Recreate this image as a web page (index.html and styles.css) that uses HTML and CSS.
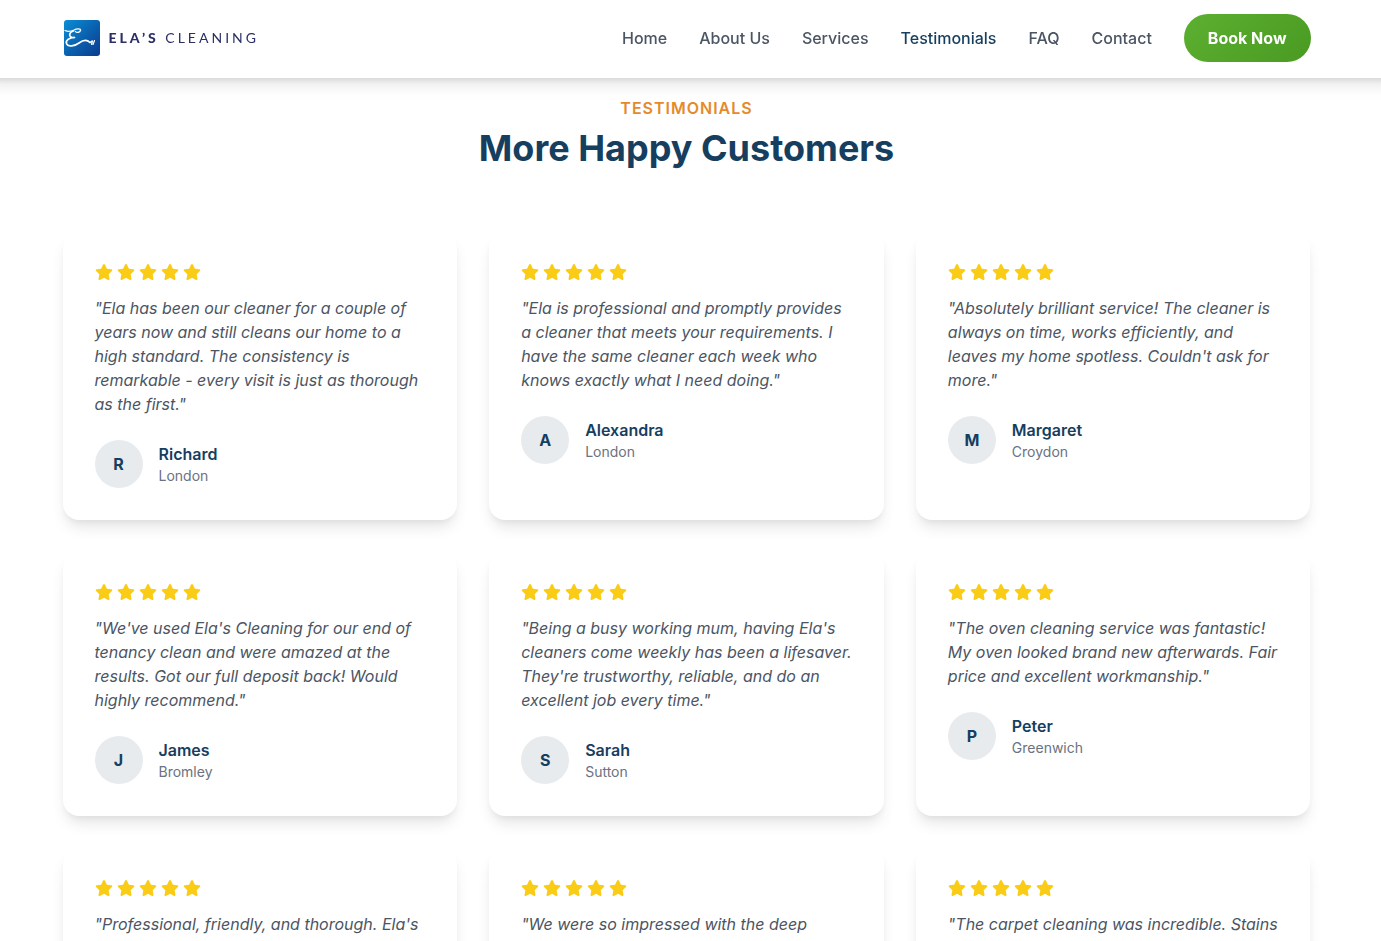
FILE: index.html
```html
<!DOCTYPE html>
<html lang="en">
<head>
    <meta charset="UTF-8">
    <meta name="viewport" content="width=device-width, initial-scale=1.0">
    <title>Testimonials - Ela's Cleaning</title>
    <link rel="stylesheet" href="styles.css">
</head>
<body>
    <!-- Shared icons -->
    <svg class="sprite" aria-hidden="true">
        <symbol id="star" viewBox="0 0 576 512">
            <path d="M316.9 18C311.6 7 300.4 0 288.1 0s-23.4 7-28.8 18L195 150.3 51.4 171.5c-12 1.8-22 10.2-25.7 21.7s-.7 24.2 7.9 32.7L137.8 329 113.2 474.7c-2 12 3 24.2 12.9 31.3s23 8 33.8 2.3l128.3-68.5 128.3 68.5c10.8 5.7 23.9 4.9 33.8-2.3s14.9-19.3 12.9-31.3L438.5 329 542.7 225.9c8.6-8.5 11.7-21.2 7.9-32.7s-13.7-19.9-25.7-21.7L381.2 150.3 316.9 18z"/>
        </symbol>
        <symbol id="stars" viewBox="0 0 106 16">
            <use href="#star" x="0" width="18" height="16"/>
            <use href="#star" x="22" width="18" height="16"/>
            <use href="#star" x="44" width="18" height="16"/>
            <use href="#star" x="66" width="18" height="16"/>
            <use href="#star" x="88" width="18" height="16"/>
        </symbol>
    </svg>

    <header class="header">
        <div class="container header-inner">
            <a href="#" class="logo">
                <svg class="logo-mark" viewBox="0 0 36 36" aria-hidden="true">
                    <defs>
                        <linearGradient id="logoBlue" x1="0" y1="0" x2="1" y2="1">
                            <stop offset="0" stop-color="#0a8fd6"/>
                            <stop offset="0.5" stop-color="#0a62b0"/>
                            <stop offset="1" stop-color="#0a3c8c"/>
                        </linearGradient>
                    </defs>
                    <rect width="36" height="36" rx="3" fill="url(#logoBlue)"/>
                    <g fill="none" stroke="#fff" stroke-linecap="round" stroke-linejoin="round">
                        <path stroke-width="1.3" d="M1 10.500C4 12 7 11.500 10 10C13 8.300 17 8.500 16.500 10.500C16 12.500 12.500 13 11.500 11.500"/>
                        <path stroke-width="1.7" d="M9.500 11C4.500 12.500 4 18 10.500 17.500C5 17.500 1.500 20.500 2.500 23.500C4 27.500 11 26 15 23C19 20 23 19.500 26 22.500"/>
                        <path stroke-width="1.2" d="M26 22.500L28 21M27.500 24.500L28.500 21M29 24.500L30.500 20.500"/>
                    </g>
                </svg>
                <span class="logo-text"><strong>ELA’S</strong> CLEANING</span>
            </a>
            <nav class="nav">
                <a href="#">Home</a>
                <a href="#">About Us</a>
                <a href="#">Services</a>
                <a href="#" class="active">Testimonials</a>
                <a href="#">FAQ</a>
                <a href="#">Contact</a>
                <a href="#" class="btn">Book Now</a>
            </nav>
        </div>
    </header>

    <main class="testimonials">
        <div class="container">
            <div class="section-title">
                <p class="eyebrow">TESTIMONIALS</p>
                <h2>More Happy Customers</h2>
            </div>

            <div class="grid">
                <article class="card">
                    <svg class="stars" role="img" aria-label="5 stars"><use href="#stars"/></svg>
                    <p class="quote">"Ela has been our cleaner for a couple of years now and still cleans our home to a high standard. The consistency is remarkable - every visit is just as thorough as the first."</p>
                    <div class="author">
                        <div class="avatar">R</div>
                        <div>
                            <h4>Richard</h4>
                            <p>London</p>
                        </div>
                    </div>
                </article>

                <article class="card">
                    <svg class="stars" role="img" aria-label="5 stars"><use href="#stars"/></svg>
                    <p class="quote">"Ela is professional and promptly provides a cleaner that meets your requirements. I have the same cleaner each week who knows exactly what I need doing."</p>
                    <div class="author">
                        <div class="avatar">A</div>
                        <div>
                            <h4>Alexandra</h4>
                            <p>London</p>
                        </div>
                    </div>
                </article>

                <article class="card">
                    <svg class="stars" role="img" aria-label="5 stars"><use href="#stars"/></svg>
                    <p class="quote">"Absolutely brilliant service! The cleaner is always on time, works efficiently, and leaves my home spotless. Couldn't ask for more."</p>
                    <div class="author">
                        <div class="avatar">M</div>
                        <div>
                            <h4>Margaret</h4>
                            <p>Croydon</p>
                        </div>
                    </div>
                </article>

                <article class="card">
                    <svg class="stars" role="img" aria-label="5 stars"><use href="#stars"/></svg>
                    <p class="quote">"We've used Ela's Cleaning for our end of tenancy clean and were amazed at the results. Got our full deposit back! Would highly recommend."</p>
                    <div class="author">
                        <div class="avatar">J</div>
                        <div>
                            <h4>James</h4>
                            <p>Bromley</p>
                        </div>
                    </div>
                </article>

                <article class="card">
                    <svg class="stars" role="img" aria-label="5 stars"><use href="#stars"/></svg>
                    <p class="quote">"Being a busy working mum, having Ela's cleaners come weekly has been a lifesaver. They're trustworthy, reliable, and do an excellent job every time."</p>
                    <div class="author">
                        <div class="avatar">S</div>
                        <div>
                            <h4>Sarah</h4>
                            <p>Sutton</p>
                        </div>
                    </div>
                </article>

                <article class="card">
                    <svg class="stars" role="img" aria-label="5 stars"><use href="#stars"/></svg>
                    <p class="quote">"The oven cleaning service was fantastic! My oven looked brand new afterwards. Fair price and excellent workmanship."</p>
                    <div class="author">
                        <div class="avatar">P</div>
                        <div>
                            <h4>Peter</h4>
                            <p>Greenwich</p>
                        </div>
                    </div>
                </article>

                <article class="card">
                    <svg class="stars" role="img" aria-label="5 stars"><use href="#stars"/></svg>
                    <p class="quote">"Professional, friendly, and thorough. Ela's</p>
                </article>

                <article class="card">
                    <svg class="stars" role="img" aria-label="5 stars"><use href="#stars"/></svg>
                    <p class="quote">"We were so impressed with the deep</p>
                </article>

                <article class="card">
                    <svg class="stars" role="img" aria-label="5 stars"><use href="#stars"/></svg>
                    <p class="quote">"The carpet cleaning was incredible. Stains</p>
                </article>
            </div>
        </div>
    </main>
</body>
</html>
```

FILE: styles.css
```css
* {
    box-sizing: border-box;
    margin: 0;
    padding: 0;
}

body {
    font-family: Inter, "Liberation Sans", sans-serif;
    font-size: 16px;
    line-height: 24px;
    color: #4b5563;
    background-color: #fff;
    height: 100vh;
    overflow: hidden;
}

a {
    color: inherit;
    text-decoration: none;
}

.sprite {
    position: absolute;
    width: 0;
    height: 0;
}

.container {
    max-width: 1280px;
    margin: 0 auto;
    padding: 0 16px;
}

/* Header, wider than the window so the shadow doesn't fade at the sides */
.header {
    position: fixed;
    top: 0;
    left: -16px;
    right: -16px;
    z-index: 10;
    padding: 14px 24px 16px 16px;
    background-color: #fff;
    box-shadow: 0 10px 15px -3px rgba(0, 0, 0, 0.1), 0 4px 6px -2px rgba(0, 0, 0, 0.1);
}

.header-inner {
    display: flex;
    align-items: center;
    justify-content: space-between;
}

.logo {
    display: flex;
    align-items: center;
    gap: 9px;
    padding-left: 1px;
}

.logo-mark {
    width: 36px;
    height: 36px;
}

.logo-text {
    font-family: Lato, sans-serif;
    font-size: 14px;
    letter-spacing: 3px;
    color: #2b2f66;
}

.logo-text strong {
    font-weight: 900;
}

.nav {
    display: flex;
    align-items: center;
    gap: 32px;
    font-weight: 500;
}

.nav .active {
    color: #163e5f;
}

.nav .btn {
    padding: 12px 24px;
    border-radius: 24px;
    font-weight: 700;
    color: #fff;
    background: linear-gradient(135deg, #5cb030, #4a9a22);
}

/* Testimonials */
.testimonials {
    padding: 96px 8px 96px 0;
}

.section-title {
    margin-bottom: 64px;
    text-align: center;
}

.eyebrow {
    margin-bottom: 8px;
    font-weight: 600;
    letter-spacing: 1px;
    color: #e58a2b;
}

.section-title h2 {
    font-size: 36px;
    line-height: 40px;
    font-weight: 700;
    color: #163e5f;
}

.grid {
    display: grid;
    grid-template-columns: repeat(3, 1fr);
    gap: 32px;
}

.card {
    padding: 32px;
    border-radius: 16px;
    background-color: #fff;
    box-shadow: 0 10px 15px -3px rgba(0, 0, 0, 0.1), 0 4px 6px -2px rgba(0, 0, 0, 0.05);
}

.stars {
    display: block;
    width: 106px;
    height: 16px;
    margin-bottom: 16px;
    fill: #facc15;
}

.quote {
    margin-bottom: 24px;
    font-style: italic;
}

.author {
    display: flex;
    align-items: center;
    gap: 16px;
}

.avatar {
    display: flex;
    align-items: center;
    justify-content: center;
    width: 48px;
    height: 48px;
    border-radius: 50%;
    font-weight: 700;
    color: #163e5f;
    background-color: #e8ebee;
}

.author h4 {
    font-size: 16px;
    font-weight: 600;
    color: #163e5f;
}

.author p {
    font-size: 14px;
    line-height: 20px;
    color: #6b7280;
}
```
